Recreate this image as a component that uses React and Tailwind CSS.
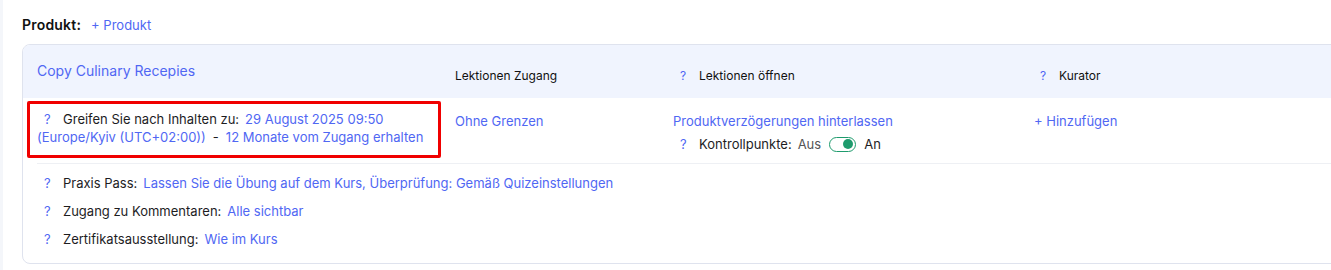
import React from 'react';

const Q = ({ className = '' }) => (
    <span className={"text-[#5067f3] inline-block w-[19px] " + className}>?</span>
);

const InfoRow = ({ label, value }) => (
    <div className="h-[28px] flex items-center pl-[21px]">
        <Q />
        <span className="text-[#1d1d1f]">{label}</span>
        <span className="ml-[6px] text-[#5067f3]">{value}</span>
    </div>
);

const Toggle = () => (
    <span className="inline-flex items-center justify-end w-[27px] h-[15px] rounded-full border-[1.5px] border-[#1e9b6d] bg-white px-[2px] mx-[8px]">
        <span className="w-[10px] h-[10px] rounded-full bg-[#1e9b6d]" />
    </span>
);

export default function App() {
    return (
        <div className="w-[1331px] h-[270px] bg-white overflow-hidden flex text-[13px] leading-[18px]" style={{ fontFamily: 'Inter, "Noto Sans", sans-serif' }}>
            <div className="w-[3px] shrink-0 bg-[#f4f6fa]" />
            <div className="flex-1 pl-[19px] pt-[16px] min-w-0">
                {/* title line */}
                <div className="flex items-center h-[18px]">
                    <span className="font-semibold text-[14px] tracking-[0.2px] text-[#111]">Produkt:</span>
                    <span className="ml-[10px] text-[#5067f3]">+ Produkt</span>
                </div>

                <div className="mt-[10px] w-[1330px] border border-[#dfe3ee] rounded-l-[8px] overflow-hidden">
                    {/* header */}
                    <div className="h-[53px] bg-[#f0f4fe] flex">
                        <div className="w-[432px] pl-[14px] pt-[16px] text-[14px] leading-[20px] text-[#5067f3]">Copy Culinary Recepies</div>
                        <div className="w-[218px] pt-[23px] text-[12px] leading-[16px] text-[#111]">Lektionen Zugang</div>
                        <div className="w-[361px] pt-[23px] pl-[7px] text-[12px] leading-[16px] text-[#111] flex">
                            <Q />Lektionen öffnen
                        </div>
                        <div className="pt-[23px] pl-[6px] text-[12px] leading-[16px] text-[#111] flex">
                            <Q />Kurator
                        </div>
                    </div>

                    {/* main row */}
                    <div className="flex pt-[3px] pb-[5px]">
                        <div className="ml-[4px] w-[414px] border-[3px] border-[#f00000] rounded-[2px] pt-[6px] pb-[9px] pl-[7px] pr-[4px] text-[#1d1d1f]">
                            <span className="ml-[7px]"><Q /></span>Greifen Sie nach Inhalten zu:
                            <span className="ml-[6px] text-[#5067f3]">29 August 2025 09:50 (Europe/Kyiv (UTC+02:00))</span>
                            <span className="mx-[7px]">-</span>
                            <span className="text-[#5067f3]">12 Monate vom Zugang erhalten</span>
                        </div>
                        <div className="ml-[14px] w-[218px] pt-[11px] text-[#5067f3]">Ohne Grenzen</div>
                        <div className="w-[361px] pt-[11px]">
                            <div className="text-[#5067f3]">Produktverzögerungen hinterlassen</div>
                            <div className="mt-[3px] flex items-center h-[22px] pl-[7px]">
                                <Q />
                                <span className="text-[#1d1d1f]">Kontrollpunkte:</span>
                                <span className="ml-[6px] text-[#555]">Aus</span>
                                <Toggle />
                                <span className="text-[#1d1d1f]">An</span>
                            </div>
                        </div>
                        <div className="pt-[11px] text-[#5067f3]">+ Hinzufügen</div>
                    </div>

                    <div className="ml-[14px] border-t border-[#eef0f4]" />

                    <div className="pt-[5px] pb-[10px]">
                        <InfoRow label="Praxis Pass:" value="Lassen Sie die Übung auf dem Kurs, Überprüfung: Gemäß Quizeinstellungen" />
                        <InfoRow label="Zugang zu Kommentaren:" value="Alle sichtbar" />
                        <InfoRow label="Zertifikatsausstellung:" value="Wie im Kurs" />
                    </div>
                </div>
            </div>
        </div>
    );
}
